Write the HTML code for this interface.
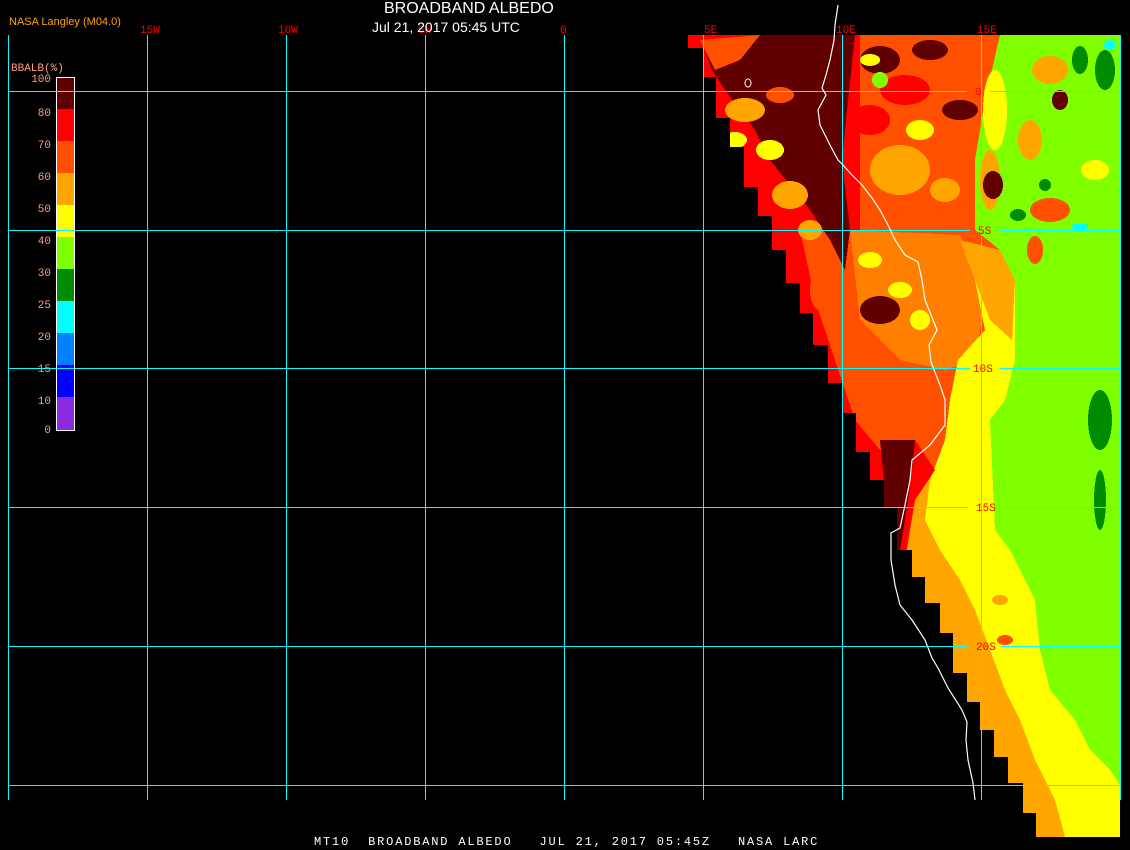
<!DOCTYPE html>
<html><head><meta charset="utf-8"><style>
html,body{margin:0;padding:0;background:#000;}
body{width:1130px;height:850px;overflow:hidden;position:relative;font-family:"Liberation Sans",sans-serif;}
.t{position:absolute;white-space:nowrap;}
</style></head><body>
<svg width="1130" height="850" style="position:absolute;left:0;top:0" shape-rendering="crispEdges">
<defs>
<clipPath id="c"><polygon points="688,35 1120,35 1120,837 1036,837 1036,813 1023,813 1023,783 1008,783 1008,757 994,757 994,730 980,730 980,702 967,702 967,673 953,673 953,633 940,633 940,603 925,603 925,577 912,577 912,550 897,550 897,507 884,507 884,480 870,480 870,452 856,452 856,413 842,413 842,383 828,383 828,345 813,345 813,313 800,313 800,283 786,283 786,250 772,250 772,216 758,216 758,187 744,187 744,147 730,147 730,118 716,118 716,77 703,77 703,48 688,48"/></clipPath>
</defs>
<g clip-path="url(#c)">
<rect x="680" y="30" width="450" height="820" fill="#ff5000"/>
<rect x="680" y="30" width="180" height="200" fill="#ff0000"/>
<polygon points="860,35 1000,35 990,120 960,200 900,230 860,230" fill="#ff5000"/>
<polygon points="850,230 960,235 985,300 975,360 945,370 900,360 860,320" fill="#ff8000"/>
<!-- south orange -->
<polygon points="880,470 1120,470 1120,837 880,837" fill="#ffa500"/>
<!-- green -->
<polygon points="1000,35 1120,35 1120,785 1110,770 1090,750 1075,720 1050,690 1040,650 1035,600 1020,570 1010,550 995,530 990,420 1005,400 1015,360 1015,280 1000,250 975,230 975,160 985,100" fill="#80ff00"/>
<!-- yellow -->
<polygon points="960,240 1000,250 1015,280 1015,360 1005,400 990,420 995,530 1010,550 1020,570 1035,600 1040,650 1050,690 1075,720 1090,750 1110,770 1120,785 1120,837 1065,837 1055,800 1035,760 1020,720 1005,690 990,650 975,610 960,580 940,550 925,520 930,480 945,440 950,400 958,360 985,330 975,280" fill="#ffff00"/>
<polygon points="960,240 1000,250 1015,280 1012,340 990,320 975,280" fill="#ffa500"/>
<!-- red strip along edge -->
<polygon points="772,216 800,230 815,300 835,360 855,420 880,450 915,440 935,470 915,500 905,560 897,560 897,507 884,507 884,480 870,480 870,452 856,452 856,413 842,413 842,383 828,383 828,345 813,345 813,313 800,313 800,283 786,283 786,250 772,250" fill="#ff0000"/>
<polygon points="880,440 915,440 912,470 905,520 900,550 897,550 897,507 884,507 884,480" fill="#600000"/>
<!-- dark red north -->
<polygon points="760,35 855,35 848,100 842,160 850,230 845,270 830,240 810,210 790,185 770,160 755,130 740,110 725,90 712,70 705,50" fill="#600000"/>
<polygon points="700,40 760,35 740,60 715,70" fill="#ff5000"/>
<ellipse cx="745" cy="110" rx="20" ry="12" fill="#ffa500"/>
<ellipse cx="770" cy="150" rx="14" ry="10" fill="#ffff00"/>
<ellipse cx="790" cy="195" rx="18" ry="14" fill="#ffa500"/>
<ellipse cx="735" cy="140" rx="12" ry="8" fill="#ffff00"/>
<ellipse cx="780" cy="95" rx="14" ry="8" fill="#ff5000"/>
<ellipse cx="810" cy="230" rx="12" ry="10" fill="#ffa500"/>
<ellipse cx="820" cy="290" rx="10" ry="20" fill="#ff5000"/>
<ellipse cx="880" cy="60" rx="20" ry="14" fill="#600000"/>
<ellipse cx="930" cy="50" rx="18" ry="10" fill="#600000"/>
<ellipse cx="905" cy="90" rx="25" ry="15" fill="#ff0000"/>
<ellipse cx="870" cy="120" rx="20" ry="15" fill="#ff0000"/>
<ellipse cx="960" cy="110" rx="18" ry="10" fill="#600000"/>
<ellipse cx="920" cy="130" rx="14" ry="10" fill="#ffff00"/>
<ellipse cx="880" cy="80" rx="8" ry="8" fill="#80ff00"/>
<ellipse cx="870" cy="60" rx="10" ry="6" fill="#ffff00"/>
<ellipse cx="900" cy="170" rx="30" ry="25" fill="#ffa500"/>
<ellipse cx="945" cy="190" rx="15" ry="12" fill="#ffa500"/>
<ellipse cx="995" cy="110" rx="12" ry="40" fill="#ffff00"/>
<ellipse cx="990" cy="180" rx="10" ry="30" fill="#ffa500"/>
<ellipse cx="1050" cy="70" rx="18" ry="14" fill="#ffa500"/>
<ellipse cx="1030" cy="140" rx="12" ry="20" fill="#ffa500"/>
<ellipse cx="1050" cy="210" rx="20" ry="12" fill="#ff5000"/>
<ellipse cx="1095" cy="170" rx="14" ry="10" fill="#ffff00"/>
<ellipse cx="1060" cy="100" rx="8" ry="10" fill="#600000"/>
<ellipse cx="1080" cy="60" rx="8" ry="14" fill="#008c00"/>
<ellipse cx="1105" cy="70" rx="10" ry="20" fill="#008c00"/>
<ellipse cx="1018" cy="215" rx="8" ry="6" fill="#008c00"/>
<ellipse cx="1045" cy="185" rx="6" ry="6" fill="#008c00"/>
<ellipse cx="1110" cy="45" rx="6" ry="5" fill="#00ffff"/>
<ellipse cx="993" cy="185" rx="10" ry="14" fill="#600000"/>
<ellipse cx="1080" cy="227" rx="8" ry="4" fill="#00ffff"/>
<ellipse cx="1035" cy="250" rx="8" ry="14" fill="#ff5000"/>
<ellipse cx="880" cy="310" rx="20" ry="14" fill="#600000"/>
<ellipse cx="900" cy="290" rx="12" ry="8" fill="#ffff00"/>
<ellipse cx="870" cy="260" rx="12" ry="8" fill="#ffff00"/>
<ellipse cx="920" cy="320" rx="10" ry="10" fill="#ffff00"/>
<ellipse cx="1100" cy="420" rx="12" ry="30" fill="#008c00"/>
<ellipse cx="1100" cy="500" rx="6" ry="30" fill="#008c00"/>
<ellipse cx="1005" cy="640" rx="8" ry="5" fill="#ff5000"/>
<ellipse cx="1000" cy="600" rx="8" ry="5" fill="#ffa500"/>
</g>
<!-- grid -->
<g stroke="#00ffff" stroke-width="1">
<line x1="8.5" y1="35" x2="8.5" y2="800"/>
<line x1="147.5" y1="35" x2="147.5" y2="800"/>
<line x1="286.5" y1="35" x2="286.5" y2="800"/>
<line x1="425.5" y1="35" x2="425.5" y2="800"/>
<line x1="564.5" y1="35" x2="564.5" y2="800"/>
<line x1="703.5" y1="35" x2="703.5" y2="800"/>
<line x1="842.5" y1="35" x2="842.5" y2="800"/>
<line x1="981.5" y1="35" x2="981.5" y2="800"/>
<line x1="1120.5" y1="35" x2="1120.5" y2="800"/>
<line x1="8" y1="91.5" x2="967" y2="91.5"/><line x1="990" y1="91.5" x2="1120" y2="91.5"/>
<line x1="8" y1="230.5" x2="970" y2="230.5"/><line x1="1000" y1="230.5" x2="1120" y2="230.5"/>
<line x1="8" y1="368.5" x2="970" y2="368.5"/><line x1="1000" y1="368.5" x2="1120" y2="368.5"/>
<line x1="8" y1="507.5" x2="968" y2="507.5"/><line x1="1000" y1="507.5" x2="1120" y2="507.5"/>
<line x1="8" y1="646.5" x2="968" y2="646.5"/><line x1="1002" y1="646.5" x2="1120" y2="646.5"/>
<line x1="8" y1="785.5" x2="1120" y2="785.5"/>
</g>
<polyline fill="none" stroke="#fff" stroke-width="1.2" shape-rendering="auto" points="838,5 835,25 834,40 830,60 826,75 822,88 826,95 818,110 820,125 830,145 838,160 843,165 852,175 862,185 872,198 880,210 888,225 895,240 905,255 918,262 922,280 925,300 937,330 929,345 931,362 940,385 945,400 945,425 930,445 912,460 910,480 905,505 900,528 891,533 891,560 895,585 900,605 912,620 925,640 932,658 938,668 948,688 962,710 967,722 966,740 968,760 973,783 975,800"/>
<ellipse cx="748" cy="83" rx="3" ry="4" fill="none" stroke="#fff" stroke-width="1"/>
<g>
<rect x="56" y="77" width="18" height="32" fill="#600000"/>
<rect x="56" y="109" width="18" height="32" fill="#ff0000"/>
<rect x="56" y="141" width="18" height="32" fill="#ff5000"/>
<rect x="56" y="173" width="18" height="32" fill="#ffa500"/>
<rect x="56" y="205" width="18" height="32" fill="#ffff00"/>
<rect x="56" y="237" width="18" height="32" fill="#80ff00"/>
<rect x="56" y="269" width="18" height="32" fill="#008c00"/>
<rect x="56" y="301" width="18" height="32" fill="#00ffff"/>
<rect x="56" y="333" width="18" height="32" fill="#0080ff"/>
<rect x="56" y="365" width="18" height="32" fill="#0000ff"/>
<rect x="56" y="397" width="18" height="33" fill="#8a2be2"/>
<rect x="56.5" y="77.5" width="18" height="353" fill="none" stroke="#fff" stroke-width="1"/>
<line x1="8" y1="91.5" x2="74" y2="91.5" stroke="#00ffff"/>
<line x1="8" y1="230.5" x2="74" y2="230.5" stroke="#00ffff"/>
<line x1="8" y1="368.5" x2="74" y2="368.5" stroke="#00ffff"/>
</g>
<g font-family="Liberation Mono, monospace" font-size="11" fill="#ffa07a" text-anchor="end">
<text x="51" y="82">100</text><text x="51" y="116">80</text><text x="51" y="148">70</text>
<text x="51" y="180">60</text><text x="51" y="212">50</text><text x="51" y="244">40</text>
<text x="51" y="276">30</text><text x="51" y="308">25</text><text x="51" y="340">20</text>
<text x="51" y="372">15</text><text x="51" y="404">10</text><text x="51" y="433">0</text>
<text x="11" y="71" text-anchor="start">BBALB(%)</text>
</g>
<g font-family="Liberation Mono, monospace" font-size="11" fill="#ff0000">
<text x="140" y="33">15W</text><text x="278" y="33">10W</text><text x="418" y="33">5W</text>
<text x="560" y="33">0</text><text x="704" y="33">5E</text><text x="836" y="33">10E</text><text x="977" y="33">15E</text>
<text x="975" y="95">0</text><text x="978" y="234">5S</text><text x="973" y="372">10S</text>
<text x="976" y="511">15S</text><text x="976" y="650">20S</text>
</g>
</svg>
<div class="t" style="left:384px;top:0px;font-size:16px;color:#fff;">BROADBAND ALBEDO</div>
<div class="t" style="left:372px;top:19px;font-size:14px;color:#fff;">Jul 21, 2017 05:45 UTC</div>
<div class="t" style="left:9px;top:16px;font-size:11px;color:#ffa500;">NASA Langley (M04.0)</div>
<div class="t" style="left:314px;top:835px;font-size:12px;color:#fff;font-family:'Liberation Mono',monospace;letter-spacing:1.82px;white-space:pre;">MT10  BROADBAND ALBEDO   JUL 21, 2017 05:45Z   NASA LARC</div>
</body></html>
